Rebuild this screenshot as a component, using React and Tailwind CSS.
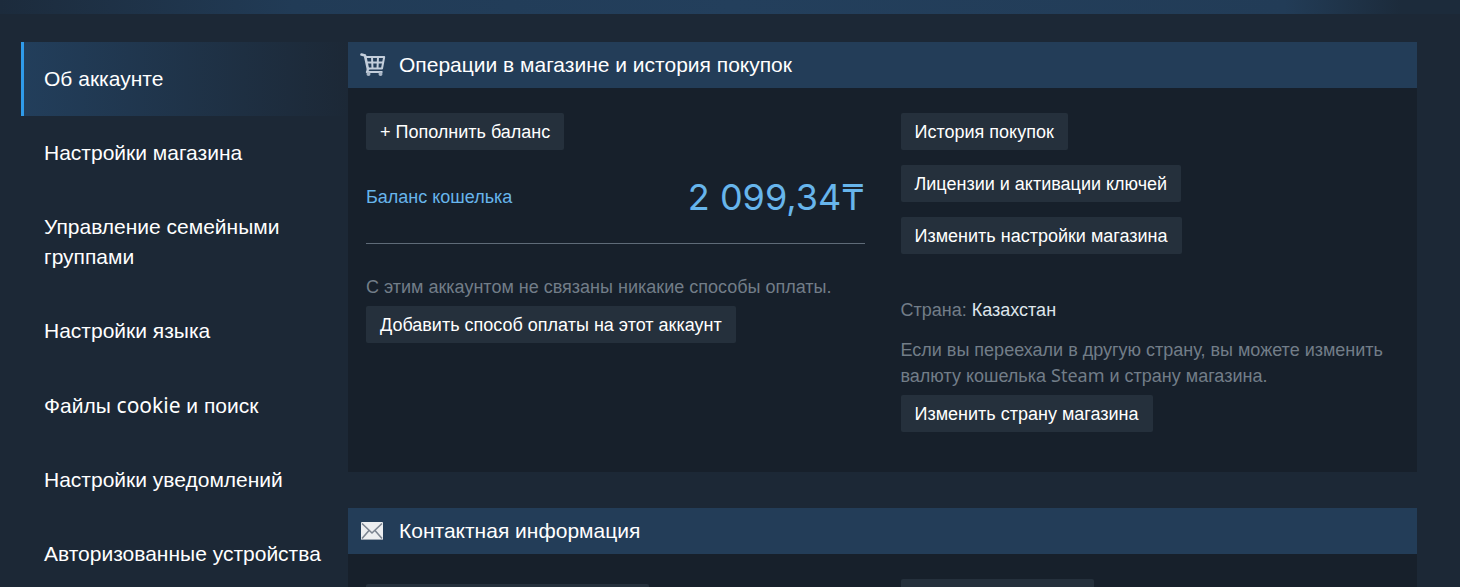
const navItems = [
  { label: 'Об аккаунте', active: true },
  { label: 'Настройки магазина' },
  { label: 'Управление семейными группами' },
  { label: 'Настройки языка' },
  { label: <>Файлы <Latin>cookie</Latin> и поиск</> },
  { label: 'Настройки уведомлений' },
  { label: 'Авторизованные устройства' },
];

// Latin words use a different face than the Cyrillic text around them
function Latin({ children }) {
  return <span className="font-['Noto_Sans',sans-serif]">{children}</span>;
}

function CartIcon() {
  return (
    <svg width="26" height="24" viewBox="0 0 26 24" fill="none" stroke="#c3cedb" aria-hidden="true">
      <path d="M1.5 1.5L5 2.5L8 16.5" strokeWidth="2.6" strokeLinecap="round" strokeLinejoin="round" />
      <path d="M5 4H24.2L22 15.5H8" strokeWidth="2" strokeLinejoin="round" />
      <path d="M6 9.5H23.5M12 4L12.5 15.5M18 4L17.5 15.5" strokeWidth="2" />
      <path d="M8 16L6.8 19H22.5" strokeWidth="2" strokeLinejoin="round" />
      <circle cx="8.5" cy="21" r="2" fill="#a9b6c5" stroke="none" />
      <circle cx="20.5" cy="21" r="2" fill="#a9b6c5" stroke="none" />
    </svg>
  );
}

function MailIcon() {
  return (
    <svg width="24" height="18" viewBox="0 0 24 18" fill="none" aria-hidden="true">
      <rect x="1" width="22" height="18" rx="1" fill="#eceef0" />
      <path d="M2 1.5L12 11L22 1.5M2 16.5L9 8.5M22 16.5L15 8.5" stroke="#7b8490" strokeWidth="1.6" />
      <path d="M1 17.5H23" stroke="#9aa4af" />
    </svg>
  );
}

function Button({ children }) {
  return (
    <button
      type="button"
      className="h-[37px] px-[14px] rounded-xs bg-[#25303c] text-lg leading-6 text-white text-left whitespace-nowrap hover:bg-[#314152]"
    >
      {children}
    </button>
  );
}

function Section({ icon, title, children }) {
  return (
    <section>
      <header className="flex items-center h-[46px] px-3 bg-[#233d58]">
        <div className="w-[39px] shrink-0">{icon}</div>
        <h2 className="text-[21px] leading-8 text-white">{title}</h2>
      </header>
      <div className="grid grid-cols-[499fr_499fr] gap-9 bg-[#17202b] px-[18px] pt-[25px] pb-10">
        {children}
      </div>
    </section>
  );
}

export default function App() {
  return (
    <div className="h-screen overflow-hidden bg-[#1c2836] font-['Liberation_Sans',Arial,sans-serif]">
      <div className="h-[14px] bg-[linear-gradient(to_right,#1c2b3c,#213b56_20%,#233f5c_50%,#223c57_88%,#1c2b3b_96%)]" />

      <div className="flex mt-7 pl-[21px] pr-[43px]">
        <nav className="w-[327px] shrink-0 text-[21px] leading-[30px] text-white">
          {navItems.map((item, i) => (
            <a
              key={i}
              href="#"
              className={
                item.active
                  ? 'block border-l-3 border-[#2f9bea] py-[22px] pl-5 pr-7 bg-linear-to-r from-[#223e5b] to-transparent'
                  : 'block border-l-3 border-transparent py-[22px] pl-5 pr-2'
              }
            >
              {item.label}
            </a>
          ))}
        </nav>

        <main className="flex-1 min-w-0 flex flex-col gap-9">
          <Section icon={<CartIcon />} title="Операции в магазине и история покупок">
            <div>
              <Button>+ Пополнить баланс</Button>
              <div className="flex items-center justify-between h-[94px] border-b border-[#5f6b78] text-[#67b5ec]">
                <span className="text-lg">Баланс кошелька</span>
                <span className="font-['Inter',sans-serif] text-4xl">2 099,34₸</span>
              </div>
              <div className="mt-[31px] text-lg leading-[25px] text-[#727d88]">
                <p className="mb-[6px]">С этим аккаунтом не связаны никакие способы оплаты.</p>
                <Button>Добавить способ оплаты на этот аккаунт</Button>
              </div>
            </div>

            <div>
              <div className="flex flex-col items-start gap-[15px]">
                <Button>История покупок</Button>
                <Button>Лицензии и активации ключей</Button>
                <Button>Изменить настройки магазина</Button>
              </div>
              <div className="mt-11 text-lg leading-[25px] text-[#727d88]">
                <p className="mb-[15px]">
                  Страна: <span className="text-[#dfe6ec]">Казахстан</span>
                </p>
                <p className="mb-[6px]">
                  Если вы переехали в другую страну, вы можете изменить валюту кошелька <Latin>Steam</Latin> и страну
                  магазина.
                </p>
                <Button>Изменить страну магазина</Button>
              </div>
            </div>
          </Section>

          <Section icon={<MailIcon />} title="Контактная информация">
            <div className="pt-[5px]">
              <div className="w-[283px] h-[37px] rounded-xs bg-[#25303c]" />
            </div>
            <div>
              <div className="w-[193px] h-[37px] rounded-xs bg-[#25303c]" />
            </div>
          </Section>
        </main>
      </div>
    </div>
  );
}
